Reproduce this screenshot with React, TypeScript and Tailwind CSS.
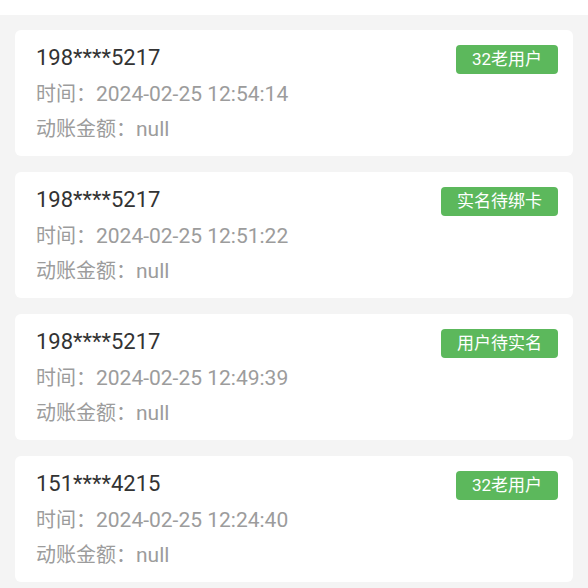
const records = [
  { phone: '198****5217', time: '2024-02-25 12:54:14', amount: 'null', tag: '32老用户' },
  { phone: '198****5217', time: '2024-02-25 12:51:22', amount: 'null', tag: '实名待绑卡' },
  { phone: '198****5217', time: '2024-02-25 12:49:39', amount: 'null', tag: '用户待实名' },
  { phone: '151****4215', time: '2024-02-25 12:24:40', amount: 'null', tag: '32老用户' },
];

export default function App() {
  return (
    <div
      className="min-h-[588px] bg-[#f4f4f4]"
      style={{ fontFamily: 'Roboto, "Noto Sans CJK SC", sans-serif' }}
    >
      <div className="h-[15px] bg-white" />
      <div className="flex flex-col gap-4 px-[15px] pt-[15px] pb-4">
        {records.map((r, i) => (
          <div key={i} className="rounded-md bg-white pl-[21px] pr-[15px] pt-[10px] pb-[9px]">
            <div className="flex items-start justify-between">
              <span className="text-[22px] leading-[36px] text-[#333333]">{r.phone}</span>
              <span className="mt-[5px] rounded bg-[#5cb85c] px-[16px] text-[17px] leading-[29px] text-white">
                {r.tag}
              </span>
            </div>
            <div className="text-[20px] leading-[36px] text-[#9c9c9c]">
              时间：<span className="text-[21px]">{r.time}</span>
            </div>
            <div className="text-[20px] leading-[35px] text-[#9c9c9c]">
              动账金额：<span className="text-[21px]">{r.amount}</span>
            </div>
          </div>
        ))}
      </div>
    </div>
  );
}
